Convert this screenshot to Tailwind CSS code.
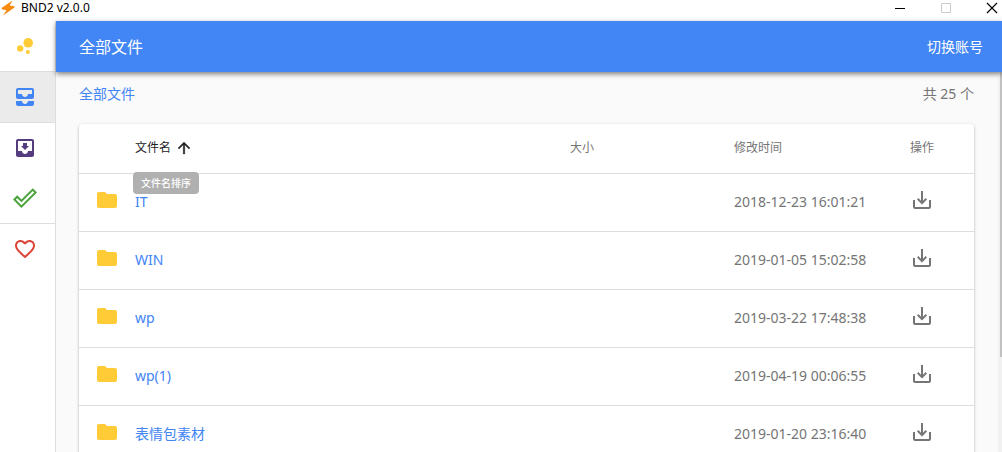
<!DOCTYPE html>
<html lang="zh-CN">
  <head>
    <meta charset="UTF-8" />
    <meta name="viewport" content="width=device-width, initial-scale=1.0" />
    <title>BND2 v2.0.0</title>
    <script src="https://cdn.jsdelivr.net/npm/@tailwindcss/browser@4"></script>
  </head>
  <body
    class="flex h-screen flex-col overflow-hidden bg-white font-['Noto_Sans','Noto_Sans_CJK_SC',sans-serif] text-sm text-[#757575]"
  >
    <svg class="hidden">
      <symbol id="folder" viewBox="0 0 24 24">
        <path d="M10 4H4c-1.1 0-2 .9-2 2v12c0 1.1.9 2 2 2h16c1.1 0 2-.9 2-2V8c0-1.1-.9-2-2-2h-8l-2-2z" />
      </symbol>
      <symbol id="download" viewBox="0 0 24 24">
        <path
          d="M19 12v7H5v-7H3v7c0 1.1.9 2 2 2h14c1.1 0 2-.9 2-2v-7h-2zm-6 .67l2.59-2.58L17 11.5l-5 5-5-5 1.41-1.41L11 12.67V3h2v9.67z"
        />
      </symbol>
    </svg>

    <!-- Title bar -->
    <div class="flex h-[21px] shrink-0 items-start justify-between text-xs text-black">
      <div class="flex items-center">
        <svg class="size-4" viewBox="0 0 16 16" fill="#f7890f">
          <path d="M12.5.5 1.500 8l.3 1.200 4.700 1L3 15.500 14.500 7.500l-.2-1.300-4.600-.7z" />
        </svg>
        <span class="ml-[5px]">BND2 v2.0.0</span>
      </div>
      <div class="flex gap-[34px] pt-[2px] pr-1">
        <button type="button" aria-label="最小化">
          <svg class="size-3" viewBox="0 0 12 12" fill="none" stroke="currentColor">
            <path d="M1 6.5h10" />
          </svg>
        </button>
        <button type="button" aria-label="最大化" class="text-[#cccccc]">
          <svg class="size-3" viewBox="0 0 12 12" fill="none" stroke="currentColor">
            <path d="M1.5 1.5h9v9h-9z" />
          </svg>
        </button>
        <button type="button" aria-label="关闭">
          <svg class="size-3" viewBox="0 0 12 12" fill="none" stroke="currentColor" stroke-width="1.2">
            <path d="M1 1l10 10M11 1L1 11" />
          </svg>
        </button>
      </div>
    </div>

    <div class="flex min-h-0 flex-1">
      <!-- Sidebar -->
      <nav class="flex w-14 shrink-0 flex-col border-r border-[#dedede]">
        <a href="#" aria-label="首页" class="flex h-[51px] items-center border-b border-[#dedede] pl-[13px]">
          <svg class="size-6" viewBox="0 0 24 24" fill="#ffcb37">
            <circle cx="7.2" cy="14.4" r="3.2" />
            <circle cx="14.8" cy="18" r="2" />
            <circle cx="15.2" cy="8.8" r="4.8" />
          </svg>
        </a>
        <a
          href="#"
          aria-label="全部文件"
          class="flex h-[51px] items-center border-b border-[#dedede] bg-[#ebebeb] pl-[13px]"
        >
          <svg class="size-6" viewBox="0 0 24 24" fill="#4285f4">
            <path
              d="M19 3H5c-1.1 0-2 .9-2 2v7c0 1.1.9 2 2 2h14c1.1 0 2-.9 2-2V5c0-1.1-.9-2-2-2zm0 6h-4c0 1.62-1.38 3-3 3s-3-1.38-3-3H5V5h14v4zm-4 7h6v3c0 1.1-.9 2-2 2H5c-1.1 0-2-.9-2-2v-3h6c0 1.66 1.34 3 3 3s3-1.34 3-3z"
            />
          </svg>
        </a>
        <a href="#" aria-label="下载" class="flex h-[50px] items-center pl-[13px]">
          <svg class="size-6" viewBox="0 0 24 24" fill="#553c7f">
            <path
              d="M19 3H5c-1.1 0-2 .9-2 2v14c0 1.1.9 2 2 2h14c1.1 0 2-.9 2-2V5c0-1.1-.9-2-2-2zm0 12h-4c0 1.66-1.35 3-3 3s-3-1.34-3-3H5V5h14v10zm-3-5h-2V7h-4v3H8l4 4 4-4z"
            />
          </svg>
        </a>
        <a href="#" aria-label="已完成" class="flex h-[51px] items-center border-b border-[#dedede] pl-[13px]">
          <svg class="size-6" viewBox="0 0 24 24" fill="#4ba33c">
            <path
              d="M19.78 2.2L24 6.42 8.44 22 0 13.55l4.22-4.22 4.22 4.22L19.78 2.2m0 2.8L8.44 16.36l-4.22-4.17-1.41 1.36 5.63 5.62L21.19 6.42 19.78 5z"
            />
          </svg>
        </a>
        <a href="#" aria-label="收藏" class="flex h-[50px] items-center pl-[13px]">
          <svg class="size-6" viewBox="0 0 24 24" fill="#db4437">
            <path
              d="M16.5 3c-1.74 0-3.41.81-4.5 2.09C10.91 3.81 9.24 3 7.5 3 4.42 3 2 5.42 2 8.5c0 3.78 3.4 6.86 8.55 11.54L12 21.35l1.45-1.32C18.6 15.36 22 12.28 22 8.5 22 5.42 19.58 3 16.5 3zm-4.4 15.55l-.1.1-.1-.1C7.14 14.24 4 11.39 4 8.5 4 6.5 5.5 5 7.5 5c1.54 0 3.04.99 3.57 2.36h1.87C13.46 5.99 14.96 5 16.5 5c2 0 3.5 1.5 3.5 3.5 0 2.89-3.14 5.74-7.9 10.05z"
            />
          </svg>
        </a>
      </nav>

      <div class="flex min-w-0 flex-1 flex-col">
        <header
          class="z-10 flex h-[51px] shrink-0 items-center justify-between bg-[#4285f4] pr-[19px] pl-[23px] text-white shadow-[0_2px_5px_rgba(0,0,0,0.5)]"
        >
          <h1 class="text-base">全部文件</h1>
          <button type="button">切换账号</button>
        </header>

        <div class="flex min-h-0 flex-1 bg-[#fafafa]">
          <main class="min-w-0 flex-1 overflow-hidden pr-6 pl-[23px]">
            <div class="flex h-[52px] items-center justify-between pb-2">
              <a href="#" class="text-[#4285f4]">全部文件</a>
              <span>共 25 个</span>
            </div>

            <div class="rounded bg-white shadow-[0_1px_3px_rgba(0,0,0,0.3)]">
              <table class="w-full table-fixed text-left">
                <colgroup>
                  <col class="w-14" />
                  <col />
                  <col class="w-[164px]" />
                  <col class="w-[176px]" />
                  <col class="w-16" />
                </colgroup>
                <thead class="text-xs">
                  <tr class="h-[49px] border-b border-[#dedede]">
                    <th></th>
                    <th class="font-normal text-[#212121]">
                      <div class="relative">
                        <button type="button" class="flex items-center gap-1" aria-describedby="sort-tip">
                          文件名
                          <svg
                            class="size-[18px]"
                            viewBox="0 0 24 24"
                            fill="currentColor"
                            stroke="currentColor"
                            stroke-width="0.5"
                          >
                            <path d="M4 12l1.41 1.41L11 7.83V20h2V7.83l5.58 5.59L20 12l-8-8-8 8z" />
                          </svg>
                        </button>
                        <span
                          id="sort-tip"
                          role="tooltip"
                          class="absolute top-[33px] -left-[2px] rounded bg-[#b0b0b0] px-2 text-[10px] leading-[22px] font-medium text-white"
                          >文件名排序</span
                        >
                      </div>
                    </th>
                    <th class="font-normal">大小</th>
                    <th class="font-normal">修改时间</th>
                    <th class="font-normal">操作</th>
                  </tr>
                </thead>
                <tbody id="files"></tbody>
              </table>
            </div>
          </main>

          <!-- Scrollbar -->
          <div class="w-1 shrink-0 bg-[#f1f1f1] pl-[2px]">
            <div class="h-3/4 bg-[#c1c1c1]"></div>
          </div>
        </div>
      </div>
    </div>

    <script>
      const files = [
        ["IT", "2018-12-23 16:01:21"],
        ["WIN", "2019-01-05 15:02:58"],
        ["wp", "2019-03-22 17:48:38"],
        ["wp(1)", "2019-04-19 00:06:55"],
        ["表情包素材", "2019-01-20 23:16:40"],
      ];

      document.getElementById("files").innerHTML = files
        .map(
          ([name, time]) => `
            <tr class="h-[58px] border-b border-[#dedede]">
              <td class="pb-1 pl-4">
                <svg class="size-6" fill="#ffcb37"><use href="#folder" /></svg>
              </td>
              <td><a href="#" class="text-[#4285f4]">${name}</a></td>
              <td></td>
              <td>${time}</td>
              <td class="pb-1">
                <button type="button" class="block" aria-label="下载 ${name}">
                  <svg class="size-6" fill="currentColor"><use href="#download" /></svg>
                </button>
              </td>
            </tr>`,
        )
        .join("");
    </script>
  </body>
</html>
